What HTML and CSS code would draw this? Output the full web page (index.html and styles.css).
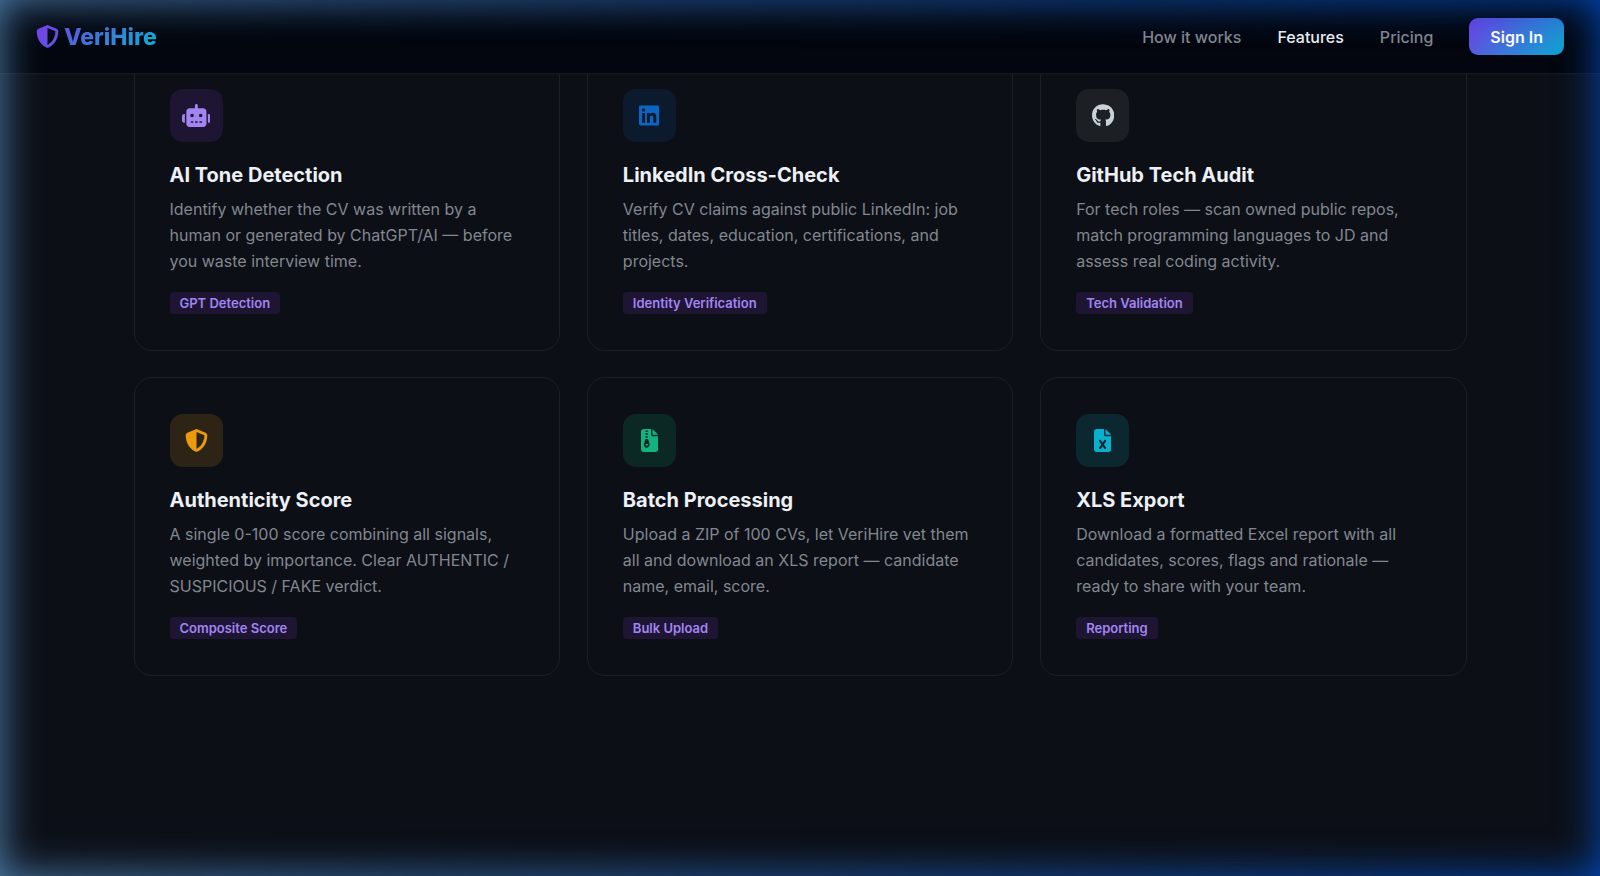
FILE: index.html
```html
<!DOCTYPE html>
<html lang="en">
<head>
  <meta charset="utf-8">
  <meta name="viewport" content="width=device-width, initial-scale=1">
  <title>VeriHire – Features</title>
  <link rel="stylesheet" href="styles.css">
</head>
<body>
  <header class="site-header">
    <a class="logo" href="#">
      <svg class="logo-icon" viewBox="0 0 512 512" aria-hidden="true">
        <defs>
          <linearGradient id="logo-fill" x1="0" y1="0" x2="1" y2="1">
            <stop offset="0" stop-color="#7c3aed"/>
            <stop offset="1" stop-color="#5a5be0"/>
          </linearGradient>
        </defs>
        <path fill="url(#logo-fill)" d="M256 0c4.6 0 9.2 1 13.4 2.9L457.7 82.8c22 9.3 38.4 31 38.3 57.2c-.5 99.2-41.3 280.7-213.6 363.2c-16.7 8-36.1 8-52.8 0C57.3 420.7 16.5 239.2 16 140c-.1-26.2 16.3-47.9 38.3-57.2L242.7 2.9C246.8 1 251.4 0 256 0zm0 66.8V444.8C394 378 431.1 230.1 432 141.4L256 66.8z"/>
      </svg>
      <span class="logo-text">VeriHire</span>
    </a>
    <nav class="nav">
      <a class="nav-link" href="#how">How it works</a>
      <a class="nav-link nav-link-active" href="#features">Features</a>
      <a class="nav-link" href="#pricing">Pricing</a>
      <button class="sign-in" type="button">Sign In</button>
    </nav>
  </header>

  <main class="features" id="features">
    <article class="card">
      <div class="card-icon violet">
        <svg class="glyph" viewBox="0 0 640 512" aria-hidden="true"><path d="M320 0c17.7 0 32 14.3 32 32V96H472c39.8 0 72 32.2 72 72V440c0 39.8-32.2 72-72 72H168c-39.8 0-72-32.2-72-72V168c0-39.8 32.2-72 72-72H288V32c0-17.7 14.3-32 32-32zM208 384c-8.8 0-16 7.2-16 16s7.2 16 16 16h32c8.8 0 16-7.2 16-16s-7.2-16-16-16H208zm96 0c-8.8 0-16 7.2-16 16s7.2 16 16 16h32c8.8 0 16-7.2 16-16s-7.2-16-16-16H304zm96 0c-8.8 0-16 7.2-16 16s7.2 16 16 16h32c8.8 0 16-7.2 16-16s-7.2-16-16-16H400zM264 256a40 40 0 1 0 -80 0 40 40 0 1 0 80 0zm152 40a40 40 0 1 0 0-80 40 40 0 1 0 0 80zM48 224H64V416H48c-26.5 0-48-21.5-48-48V272c0-26.5 21.5-48 48-48zm544 0c26.5 0 48 21.5 48 48v96c0 26.5-21.5 48-48 48H576V224h16z"/></svg>
      </div>
      <h3 class="card-title">AI Tone Detection</h3>
      <p class="card-text">Identify whether the CV was written by a human or generated by ChatGPT/AI — before you waste interview time.</p>
      <span class="tag">GPT Detection</span>
    </article>

    <article class="card">
      <div class="card-icon blue">
        <svg class="glyph" viewBox="0 0 448 512" aria-hidden="true"><path d="M416 32H31.9C14.3 32 0 46.5 0 64.3v383.4C0 465.5 14.3 480 31.9 480H416c17.6 0 32-14.5 32-32.3V64.3c0-17.8-14.4-32.3-32-32.3zM135.4 416H69V202.2h66.5V416zm-33.2-243c-21.3 0-38.5-17.3-38.5-38.5S80.9 96 102.2 96c21.2 0 38.5 17.3 38.5 38.5 0 21.3-17.2 38.5-38.5 38.5zm282.1 243h-66.4V312c0-24.8-.5-56.7-34.5-56.7-34.6 0-39.9 27-39.9 54.9V416h-66.4V202.2h63.7v29.2h.9c8.9-16.8 30.6-34.5 62.9-34.5 67.2 0 79.7 44.3 79.7 101.9V416z"/></svg>
      </div>
      <h3 class="card-title">LinkedIn Cross-Check</h3>
      <p class="card-text">Verify CV claims against public LinkedIn: job titles, dates, education, certifications, and projects.</p>
      <span class="tag">Identity Verification</span>
    </article>

    <article class="card">
      <div class="card-icon gray">
        <svg class="glyph" viewBox="0 0 496 512" aria-hidden="true"><path d="M244.8 8C106.1 8 0 113.3 0 252c0 110.9 69.8 205.8 169.5 239.2 12.8 2.3 17.3-5.6 17.3-12.1 0-6.2-.3-40.4-.3-61.4 0 0-70 15-84.7-29.8 0 0-11.4-29.1-27.8-36.6 0 0-22.9-15.7 1.6-15.4 0 0 24.9 2 38.6 25.8 21.9 38.6 58.6 27.5 72.9 20.9 2.3-16 8.8-27.1 16-33.7-55.9-6.2-112.3-14.3-112.3-110.5 0-27.5 7.6-41.3 23.6-58.9-2.6-6.5-11.1-33.3 2.6-67.9 20.9-6.5 69 27 69 27 20-5.6 41.5-8.5 62.8-8.5s42.8 2.9 62.8 8.5c0 0 48.1-33.6 69-27 13.7 34.7 5.2 61.4 2.6 67.9 16 17.7 25.8 31.5 25.8 58.9 0 96.5-58.9 104.2-114.8 110.5 9.2 7.9 17 22.9 17 46.4 0 33.7-.3 75.4-.3 83.6 0 6.5 4.6 14.4 17.3 12.1C428.2 457.8 496 362.9 496 252 496 113.3 383.5 8 244.8 8z"/></svg>
      </div>
      <h3 class="card-title">GitHub Tech Audit</h3>
      <p class="card-text">For tech roles — scan owned public repos, match programming languages to JD and assess real coding activity.</p>
      <span class="tag">Tech Validation</span>
    </article>

    <article class="card">
      <div class="card-icon amber">
        <svg class="glyph" viewBox="0 0 512 512" aria-hidden="true"><path d="M256 0c4.6 0 9.2 1 13.4 2.9L457.7 82.8c22 9.3 38.4 31 38.3 57.2c-.5 99.2-41.3 280.7-213.6 363.2c-16.7 8-36.1 8-52.8 0C57.3 420.7 16.5 239.2 16 140c-.1-26.2 16.3-47.9 38.3-57.2L242.7 2.9C246.8 1 251.4 0 256 0zm0 66.8V444.8C394 378 431.1 230.1 432 141.4L256 66.8z"/></svg>
      </div>
      <h3 class="card-title">Authenticity Score</h3>
      <p class="card-text">A single 0-100 score combining all signals, weighted by importance. Clear AUTHENTIC / SUSPICIOUS / FAKE verdict.</p>
      <span class="tag">Composite Score</span>
    </article>

    <article class="card">
      <div class="card-icon green">
        <svg class="glyph" viewBox="0 0 384 512" aria-hidden="true"><path d="M64 0C28.7 0 0 28.7 0 64V448c0 35.3 28.7 64 64 64H320c35.3 0 64-28.7 64-64V160H256c-17.7 0-32-14.3-32-32V0H64zM256 0V128H384L256 0zM96 48c0-8.8 7.2-16 16-16h32c8.8 0 16 7.2 16 16s-7.2 16-16 16H112c-8.8 0-16-7.2-16-16zm0 64c0-8.8 7.2-16 16-16h32c8.8 0 16 7.2 16 16s-7.2 16-16 16H112c-8.8 0-16-7.2-16-16zm0 64c0-8.8 7.2-16 16-16h32c8.8 0 16 7.2 16 16s-7.2 16-16 16H112c-8.8 0-16-7.2-16-16zm-6.3 71.8c3.7-14 16.4-23.8 30.9-23.8h14.8c14.5 0 27.2 9.7 30.9 23.8l23.5 88.2c1.4 5.4 2.1 10.9 2.1 16.4c0 35.2-28.8 63.7-64 63.7s-64-28.5-64-63.7c0-5.5 .7-11.1 2.1-16.4l23.5-88.2zM112 336c-8.8 0-16 7.2-16 16s7.2 16 16 16h32c8.8 0 16-7.2 16-16s-7.2-16-16-16H112z"/></svg>
      </div>
      <h3 class="card-title">Batch Processing</h3>
      <p class="card-text">Upload a ZIP of 100 CVs, let VeriHire vet them all and download an XLS report — candidate name, email, score.</p>
      <span class="tag">Bulk Upload</span>
    </article>

    <article class="card">
      <div class="card-icon cyan">
        <svg class="glyph" viewBox="0 0 384 512" aria-hidden="true"><path d="M64 0C28.7 0 0 28.7 0 64V448c0 35.3 28.7 64 64 64H320c35.3 0 64-28.7 64-64V160H256c-17.7 0-32-14.3-32-32V0H64zM256 0V128H384L256 0zM155.7 250.2L192 302.1l36.3-51.9c7.6-10.9 22.6-13.5 33.4-5.9s13.5 22.6 5.9 33.4L221.3 344l46.4 66.2c7.6 10.9 5 25.8-5.9 33.4s-25.8 5-33.4-5.9L192 385.8l-36.3 51.9c-7.6 10.9-22.6 13.5-33.4 5.9s-13.5-22.6-5.9-33.4L162.7 344l-46.4-66.2c-7.6-10.9-5-25.8 5.9-33.4s25.8-5 33.4 5.9z"/></svg>
      </div>
      <h3 class="card-title">XLS Export</h3>
      <p class="card-text">Download a formatted Excel report with all candidates, scores, flags and rationale — ready to share with your team.</p>
      <span class="tag">Reporting</span>
    </article>
  </main>

  <div class="edge-glow" aria-hidden="true"></div>
</body>
</html>
```

FILE: styles.css
```css
* {
  box-sizing: border-box;
}

body {
  margin: 0;
  min-height: 100vh;
  background: #0c0f16;
  color: #edf0f4;
  font-family: Inter, "Liberation Sans", sans-serif;
  font-size: 16px;
}

/* Header */
.site-header {
  position: sticky;
  top: 0;
  z-index: 10;
  display: flex;
  align-items: center;
  justify-content: space-between;
  padding: 18px 36px;
  background: #03060e;
  border-bottom: 1px solid #171a21;
}

.logo {
  display: flex;
  align-items: center;
  gap: 5px;
  text-decoration: none;
}

.logo-icon {
  width: 23px;
  height: 23px;
}

.logo-text {
  font-size: 23px;
  line-height: 32px;
  font-weight: 800;
  color: transparent;
  background: linear-gradient(135deg, #6350e2, #06b6d4);
  background-clip: text;
  -webkit-background-clip: text;
}

.nav {
  display: flex;
  align-items: center;
  gap: 36px;
}

.nav-link {
  color: #82878f;
  font-weight: 500;
  text-decoration: none;
}

.nav-link-active {
  color: #edf0f4;
}

.sign-in {
  height: 37px;
  padding: 0 21px;
  border: 0;
  border-radius: 9px;
  background: linear-gradient(135deg, #7040e4, #0ba8d0);
  color: #fff;
  font: inherit;
  font-weight: 600;
}

/* Feature grid; its first row slides under the header */
.features {
  display: grid;
  grid-template-columns: repeat(3, 1fr);
  gap: 26px 27px;
  width: calc(100% - 48px);
  max-width: 1333px;
  margin: -22px auto 0;
  padding-bottom: 160px;
}

.card {
  padding: 36px 35px;
  border: 1px solid #1c1f23;
  border-radius: 18px;
}

.card-icon {
  display: flex;
  align-items: center;
  justify-content: center;
  width: 53px;
  height: 53px;
  margin-bottom: 21px;
  border-radius: 13px;
}

.glyph {
  height: 23px;
  fill: currentColor;
}

.violet { background: #1d1532; color: #a285f2; }
.blue { background: #0b1b2d; color: #0a66c2; }
.gray { background: #1c1f23; color: #c9d1d9; }
.amber { background: #2e2415; color: #ec990c; }
.green { background: #0c2824; color: #12b37e; }
.cyan { background: #0b272f; color: #08b0cd; }

.card-title {
  margin: 0 0 9px;
  font-size: 20px;
  line-height: 24px;
  font-weight: 700;
}

.card-text {
  margin: 0 0 18px;
  color: #82878f;
  line-height: 26px;
}

.tag {
  display: block;
  width: fit-content;
  padding: 0 10px;
  border-radius: 4px;
  background: #1d1532;
  color: #a285f2;
  font-size: 13px;
  line-height: 22px;
  font-weight: 600;
}

/* Blue light around the window edge, paler on the left */
.edge-glow {
  position: fixed;
  inset: 0;
  z-index: 20;
  pointer-events: none;
}

.edge-glow::before,
.edge-glow::after {
  content: "";
  position: absolute;
  inset: 0;
}

.edge-glow::before {
  box-shadow: inset 0 0 42px #5080b0;
  mask-image: linear-gradient(to right, #000, transparent);
}

.edge-glow::after {
  box-shadow: inset 0 0 42px #024ab8;
  mask-image: linear-gradient(to left, #000, transparent);
}
```
